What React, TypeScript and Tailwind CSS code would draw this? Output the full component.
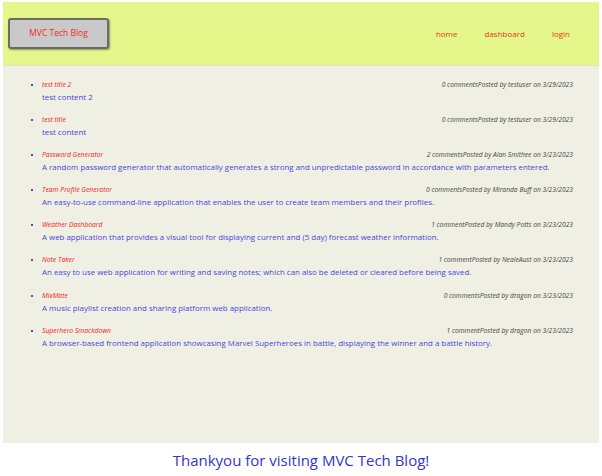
const posts = [
  { title: "test title 2", content: "test content 2", meta: "0 commentsPosted by testuser on 3/29/2023" },
  { title: "test title", content: "test content", meta: "0 commentsPosted by testuser on 3/29/2023" },
  {
    title: "Password Generator",
    content:
      "A random password generator that automatically generates a strong and unpredictable password in accordance with parameters entered.",
    meta: "2 commentsPosted by Alan Smithee on 3/23/2023",
  },
  {
    title: "Team Profile Generator",
    content:
      "An easy-to-use command-line application that enables the user to create team members and their profiles.",
    meta: "0 commentsPosted by Miranda Buff on 3/23/2023",
  },
  {
    title: "Weather Dashboard",
    content:
      "A web application that provides a visual tool for displaying current and (5 day) forecast weather information.",
    meta: "1 commentPosted by Mandy Potts on 3/23/2023",
  },
  {
    title: "Note Taker",
    content:
      "An easy to use web application for writing and saving notes; which can also be deleted or cleared before being saved.",
    meta: "1 commentPosted by NealeAust on 3/23/2023",
  },
  {
    title: "MixMate",
    content: "A music playlist creation and sharing platform web application.",
    meta: "0 commentsPosted by dragon on 3/23/2023",
  },
  {
    title: "Superhero Smackdown",
    content:
      "A browser-based frontend application showcasing Marvel Superheroes in battle, displaying the winner and a battle history.",
    meta: "1 commentPosted by dragon on 3/23/2023",
  },
];

export default function App() {
  return (
    <div className="w-[602px] h-[476px] bg-white pt-[2px] px-[3px] font-['Open_Sans',sans-serif]">
      <header className="h-[64px] bg-[#e5f78b] flex items-center justify-between pl-[5px] pr-[29px] border-b border-[#dfe3c8]">
        <button className="w-[101px] h-[31px] bg-[#c9c9c9] border-2 border-[#6b6b6b] rounded-[3px] shadow-[1px_1px_2px_rgba(0,0,0,0.4)] text-[#f0282a] text-[8.5px]">
          MVC Tech Blog
        </button>
        <nav className="flex gap-[27px] text-[8px] text-[#e8341c]">
          <a>home</a>
          <a>dashboard</a>
          <a>login</a>
        </nav>
      </header>
      <main className="h-[377px] bg-[#eff0e3] pt-[13px] pl-[39px] pr-[26px]">
        <ul className="list-disc marker:text-[#1a1a9a] flex flex-col gap-[11.1px]">
          {posts.map((p) => (
            <li key={p.title} className="text-[#4a45e0] text-[7px] leading-[11px]">
              <div className="flex justify-between items-end">
                <span className="text-[6.8px] italic text-[#f02020]">{p.title}</span>
                <span className="text-[6.7px] italic text-[#444]">{p.meta}</span>
              </div>
              <p className="text-[7.9px] leading-[12px] mt-[1px]">{p.content}</p>
            </li>
          ))}
        </ul>
      </main>
      <footer className="text-center text-[15px] text-[#3535c8] pt-[6px]">
        Thankyou for visiting MVC Tech Blog!
      </footer>
    </div>
  );
}
